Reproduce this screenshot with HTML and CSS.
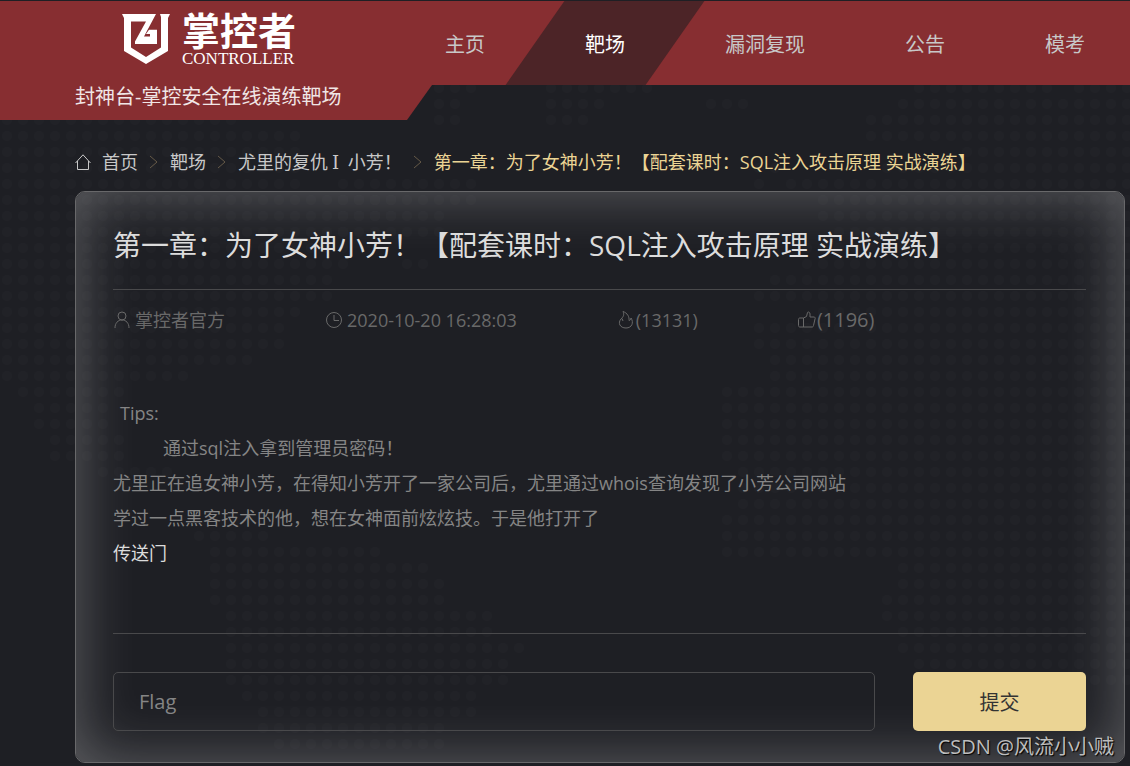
FILE: index.html
```html
<!DOCTYPE html>
<html lang="zh-CN">
<head>
    <meta charset="UTF-8">
    <meta name="viewport" content="width=device-width, initial-scale=1.0">
    <title>封神台-掌控安全在线演练靶场</title>
    <link rel="stylesheet" href="styles.css">
</head>
<body>
    <!-- dotted world map behind the page -->
    <svg class="map" aria-hidden="true">
        <defs>
            <pattern id="dots" width="16" height="16" patternUnits="userSpaceOnUse">
                <circle cx="7" cy="8" r="5" fill="#212227"/>
            </pattern>
        </defs>
        <g fill="url(#dots)">
            <path d="M0 96H144V112H240V128H304V192H400V224H352V272H336V304H304V320H288V352H256V368H192V384H128V400H112V432H128V464H176V480H96V464H48V432H32V400H16V384H0z"/>
            <path d="M432 80H480V96H464V128H432zM544 80H656V96H608V112H592V128H544zM704 96H752V112H704zM336 176H480V208H448V240H336zM400 256H432V272H400z"/>
            <path d="M912 80H1056V96H1072V80H1130V688H1088V672H1024V688H960V672H912V656H896V624H880V592H896V560H720V512H736V464H720V384H768V352H752V320H816V304H752V288H768V272H800V240H832V224H816V192H784V176H768V192H752V160H784V176H880V160H960V144H864V112H896V96H912z"/>
            <path d="M192 528H208V528H272V544H384V560H432V576H448V608H496V640H528V656H512V688H480V720H448V752H272V736H256V704H240V688H224V608H208V544H192z"/>
        </g>
    </svg>

    <header class="header">
        <a class="brand" href="#">
            <svg class="shield" viewBox="0 0 48 50" aria-hidden="true">
                <path d="M0 0H34L22 22.500H28V20H24L27 15.700H35V30H13V27.500L24 7.500H9V33.500L24 43L39 33.500V3L38 0H48L46 4V37L24 50L2 37V4z" fill="#fff"/>
            </svg>
            <span class="brand-text">
                <b class="brand-name">掌控者</b>
                <span class="brand-en">CONTROLLER</span>
            </span>
        </a>
        <nav class="nav">
            <a href="#">主页</a>
            <a class="active" href="#">靶场</a>
            <a href="#">漏洞复现</a>
            <a href="#">公告</a>
            <a href="#">模考</a>
        </nav>
    </header>
    <div class="tagline">封神台-掌控安全在线演练靶场</div>

    <main class="main">
        <nav class="breadcrumb">
            <svg class="home" viewBox="0 0 16 16" aria-hidden="true">
                <path d="M0.500 9L8 0.800L15.500 9M2.500 7V15.500H13.500V7"/>
            </svg>
            <a href="#">首页</a>
            <svg class="arrow" viewBox="0 0 10 14" aria-hidden="true"><path d="M1 1L8 7L1 13"/></svg>
            <a href="#">靶场</a>
            <svg class="arrow" viewBox="0 0 10 14" aria-hidden="true"><path d="M1 1L8 7L1 13"/></svg>
            <a href="#">尤里的复仇<span class="numeral">Ⅰ</span> 小芳！</a>
            <svg class="arrow" viewBox="0 0 10 14" aria-hidden="true"><path d="M1 1L8 7L1 13"/></svg>
            <span class="current">第一章：为了女神小芳！【配套课时：SQL注入攻击原理 实战演练】</span>
        </nav>

        <article class="card">
            <h1>第一章：为了女神小芳！【配套课时：SQL注入攻击原理 实战演练】</h1>
            <div class="meta">
                <span class="meta-item">
                    <svg viewBox="0 0 18 18" aria-hidden="true"><circle cx="9" cy="5" r="4"/><path d="M2 17C2 12 5 9 9 9S16 12 16 17"/></svg>
                    掌控者官方
                </span>
                <span class="meta-item">
                    <svg viewBox="0 0 18 18" aria-hidden="true"><circle cx="9" cy="9" r="7.500"/><path d="M9 4V9.500H14"/></svg>
                    2020-10-20 16:28:03
                </span>
                <span class="meta-item count">
                    <svg viewBox="0 0 18 18" aria-hidden="true"><path d="M6 0.500C7.500 4 6.500 5.500 4 8C0.500 12 3 17 9 17C15 17 17 11.500 14 7C14 8.500 13 9.500 12 9.500C12.500 6 10.500 2 6 0.500zM5 7.500L6 10"/></svg>
                    (13131)
                </span>
                <span class="meta-item count likes">
                    <svg viewBox="0 0 18 18" aria-hidden="true"><path d="M5.500 7L8.500 5.500L9.500 1.500C10 0.500 12 1 12 3V6H16C17 6 17.500 7 17 8L15.500 14.500C15.300 15.500 15 16 14 16H2C1 16 0.500 15.500 0.500 14.500V8.500C0.500 7.500 1 7 2 7zM5.500 7V16"/></svg>
                    (1196)
                </span>
            </div>
            <div class="content">
                <p class="tips">Tips:</p>
                <p class="hint">通过sql注入拿到管理员密码！</p>
                <p>尤里正在追女神小芳，在得知小芳开了一家公司后，尤里通过whois查询发现了小芳公司网站</p>
                <p>学过一点黑客技术的他，想在女神面前炫炫技。于是他打开了</p>
                <p><a href="#">传送门</a></p>
            </div>
            <form class="flag-form">
                <input type="text" name="flag" placeholder="Flag" aria-label="Flag">
                <button type="submit">提交</button>
            </form>
        </article>
    </main>

    <div class="watermark">CSDN @风流小小贼</div>
</body>
</html>
```
FILE: styles.css
```css
* {
    box-sizing: border-box;
}
body {
    position: relative;
    margin: 0;
    padding-top: 1px;
    min-height: 100vh;
    overflow-x: hidden;
    background-color: #1e1f24;
    color: #c8c8c8;
    font-family: "Open Sans", "Noto Sans CJK SC", sans-serif;
    font-size: 18px;
}
a {
    color: inherit;
    text-decoration: none;
}
.map {
    position: absolute;
    top: 0;
    left: 0;
    z-index: -1;
    width: 100%;
    height: 100%;
}

/* header */
.header {
    display: flex;
    height: 84px;
    overflow: hidden;
    background-color: #872e31;
}
.brand {
    display: flex;
    flex: none;
    align-items: flex-start;
    gap: 12px;
    width: 395px;
    padding: 12px 0 0 122px;
    color: #fff;
}
.shield {
    width: 48px;
    height: 52px;
}
.brand-text {
    display: flex;
    flex-direction: column;
}
.brand-name {
    font-size: 38px;
    font-weight: 700;
    line-height: 34px;
}
.brand-en {
    font-family: "Liberation Serif", serif;
    font-size: 17px;
    line-height: 24px;
}
.nav {
    display: flex;
    flex: none;
}
.nav a {
    position: relative;
    padding: 0 50px;
    font-size: 20px;
    line-height: 88px;
    white-space: nowrap;
}
.nav .active {
    z-index: 0;
    color: #fff;
}
.nav .active::before {
    content: "";
    position: absolute;
    inset: 0;
    z-index: -1;
    background-color: #4c2427;
    transform: skewX(-35deg);
}
.tagline {
    width: 432px;
    height: 35px;
    padding-left: 75px;
    background-color: #872e31;
    color: #f0e6e6;
    font-size: 20px;
    line-height: 24px;
    clip-path: polygon(0 0, 100% 0, calc(100% - 25px) 100%, 0 100%);
}

/* page */
.main {
    padding: 27px 5px 3px 75px;
}
.breadcrumb {
    display: flex;
    align-items: center;
    gap: 11px;
    margin-bottom: 14px;
    line-height: 30px;
    white-space: nowrap;
}
.breadcrumb svg {
    flex: none;
    fill: none;
}
.home {
    width: 16px;
    height: 16px;
    stroke: #c8c8c8;
}
.arrow {
    width: 10px;
    height: 14px;
    stroke: #665a48;
}
.numeral {
    padding: 0 4px;
    font-family: "DejaVu Serif", serif;
    line-height: 1;
}
.current {
    color: #ebd494;
}
.card {
    padding: 35px 38px 31px 37px;
    border: 1px solid #68686a;
    border-radius: 10px;
    box-shadow: inset 0 0 60px rgba(255, 255, 255, 0.3);
}
h1 {
    margin: 0;
    padding-bottom: 26px;
    border-bottom: 1px solid #49494b;
    color: #dcdcdc;
    font-size: 28px;
    font-weight: 400;
    line-height: 36px;
}
.meta {
    display: flex;
    gap: 100px;
    padding: 15px 0;
    color: #696969;
    line-height: 30px;
}
.meta-item {
    display: flex;
    align-items: center;
    gap: 4px;
}
.meta-item svg {
    width: 18px;
    height: 18px;
    fill: none;
    stroke: #696969;
}
.count {
    gap: 1px;
}
.likes {
    font-size: 20px;
}
.content {
    padding: 46px 0 62px;
    border-bottom: 1px solid #49494b;
    color: #858585;
    line-height: 35px;
}
.content p {
    margin: 0;
}
.content .tips {
    padding-left: 7px;
}
.content .hint {
    padding-left: 50px;
}
.content a {
    color: #dcdcdc;
}
.flag-form {
    display: flex;
    gap: 38px;
    margin-top: 38px;
}
.flag-form input,
.flag-form button {
    height: 59px;
    border-radius: 5px;
    font: inherit;
    font-size: 20px;
}
.flag-form input {
    flex: 1;
    min-width: 0;
    padding: 0 25px;
    border: 1px solid #49494b;
    background: transparent;
    color: #dcdcdc;
}
.flag-form input::placeholder {
    color: #858585;
}
.flag-form button {
    width: 173px;
    padding: 0;
    border: none;
    background-color: #ebd494;
    color: #333;
    cursor: pointer;
}
.watermark {
    position: absolute;
    right: 16px;
    bottom: 4px;
    color: #bdbdbd;
    font-size: 20px;
    line-height: 30px;
    text-shadow: 1px 1px 1px #000;
}
```
